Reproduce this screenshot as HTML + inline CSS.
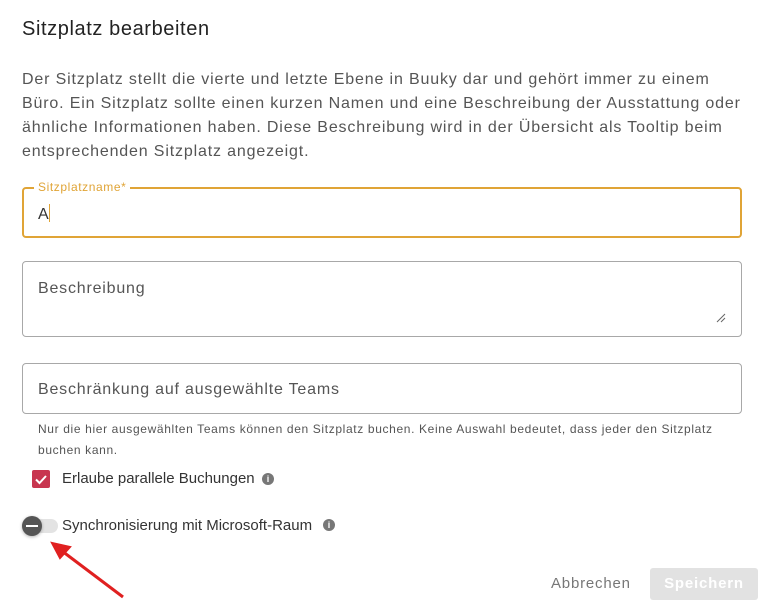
<!DOCTYPE html>
<html><head><meta charset="utf-8"><style>
*{box-sizing:border-box;margin:0;padding:0}
body{width:763px;height:605px;background:#fff;font-family:"Liberation Sans",sans-serif;position:relative;overflow:hidden;color:#333}
.a{position:absolute;white-space:nowrap}
.f{position:absolute;left:22px;width:720px;border:1px solid #a8a8a8;border-radius:4px}
</style></head><body>
<div class="a" style="left:22px;top:18px;font-size:20px;color:#222;letter-spacing:0.6px">Sitzplatz bearbeiten</div>
<div class="a" style="left:22px;top:68px;font-size:16px;line-height:24px;color:#555;letter-spacing:0.84px">Der Sitzplatz stellt die vierte und letzte Ebene in Buuky dar und gehört immer zu einem<br>Büro. Ein Sitzplatz sollte einen kurzen Namen und eine Beschreibung der Ausstattung oder<br>ähnliche Informationen haben. Diese Beschreibung wird in der Übersicht als Tooltip beim<br>entsprechenden Sitzplatz angezeigt.</div>
<div class="f" style="top:187px;height:51px;border:2px solid #e0a436"></div>
<div class="a" style="left:34px;top:180px;background:#fff;padding:0 4px;font-size:12px;color:#e0a436;letter-spacing:0.6px">Sitzplatzname*</div>
<div class="a" style="left:38px;top:204px;font-size:16px;color:#333">A<span style="display:inline-block;width:1px;height:18px;background:#e0a436;vertical-align:-3px"></span></div>
<div class="f" style="top:261px;height:76px"></div>
<div class="a" style="left:38px;top:280px;font-size:16px;color:#555;letter-spacing:0.8px">Beschreibung</div>
<svg class="a" style="left:716px;top:313px" width="10" height="10"><path d="M1 9L9 1M5 9L9 5" stroke="#666" stroke-width="1"/></svg>
<div class="f" style="top:363px;height:51px"></div>
<div class="a" style="left:38px;top:381px;font-size:16px;color:#555;letter-spacing:0.8px">Beschränkung auf ausgewählte Teams</div>
<div class="a" style="left:38px;top:419px;font-size:12px;line-height:21px;color:#555;letter-spacing:0.64px">Nur die hier ausgewählten Teams können den Sitzplatz buchen. Keine Auswahl bedeutet, dass jeder den Sitzplatz<br>buchen kann.</div>
<div class="a" style="left:32px;top:470px;width:18px;height:18px;background:#c8354f;border-radius:2px"></div>
<svg class="a" style="left:32px;top:470px" width="18" height="18"><path d="M4 9.5L7.5 13L14 6" stroke="#fff" stroke-width="2" fill="none"/></svg>
<div class="a" style="left:62px;top:470px;font-size:15px;color:#333">Erlaube parallele Buchungen</div>
<div class="a" style="left:262px;top:473px;width:12px;height:12px;border-radius:50%;background:#777;color:#fff;font-size:9px;font-weight:bold;text-align:center;line-height:12px">i</div>
<div class="a" style="left:28px;top:519px;width:30px;height:14px;border-radius:7px;background:#e3e3e3"></div>
<div class="a" style="left:22px;top:516px;width:20px;height:20px;border-radius:50%;background:#555;box-shadow:0 1px 3px rgba(0,0,0,.3)"></div>
<div class="a" style="left:26px;top:525px;width:12px;height:2px;background:#fff"></div>
<div class="a" style="left:62px;top:517px;font-size:15px;color:#333">Synchronisierung mit Microsoft-Raum</div>
<div class="a" style="left:323px;top:519px;width:12px;height:12px;border-radius:50%;background:#777;color:#fff;font-size:9px;font-weight:bold;text-align:center;line-height:12px">i</div>
<svg class="a" style="left:40px;top:530px" width="100" height="75"><path d="M83 67L18 18" stroke="#e02020" stroke-width="3"/><path d="M12 13L30 17L20 28Z" fill="#e02020" stroke="#e02020" stroke-width="2"/></svg>
<div class="a" style="left:551px;top:575px;font-size:15px;color:#777;letter-spacing:0.8px">Abbrechen</div>
<div class="a" style="left:650px;top:568px;width:108px;height:32px;background:#e2e2e2;border-radius:3px;color:#fff;font-size:15px;font-weight:bold;text-align:center;line-height:32px;letter-spacing:0.8px">Speichern</div>
</body></html>
